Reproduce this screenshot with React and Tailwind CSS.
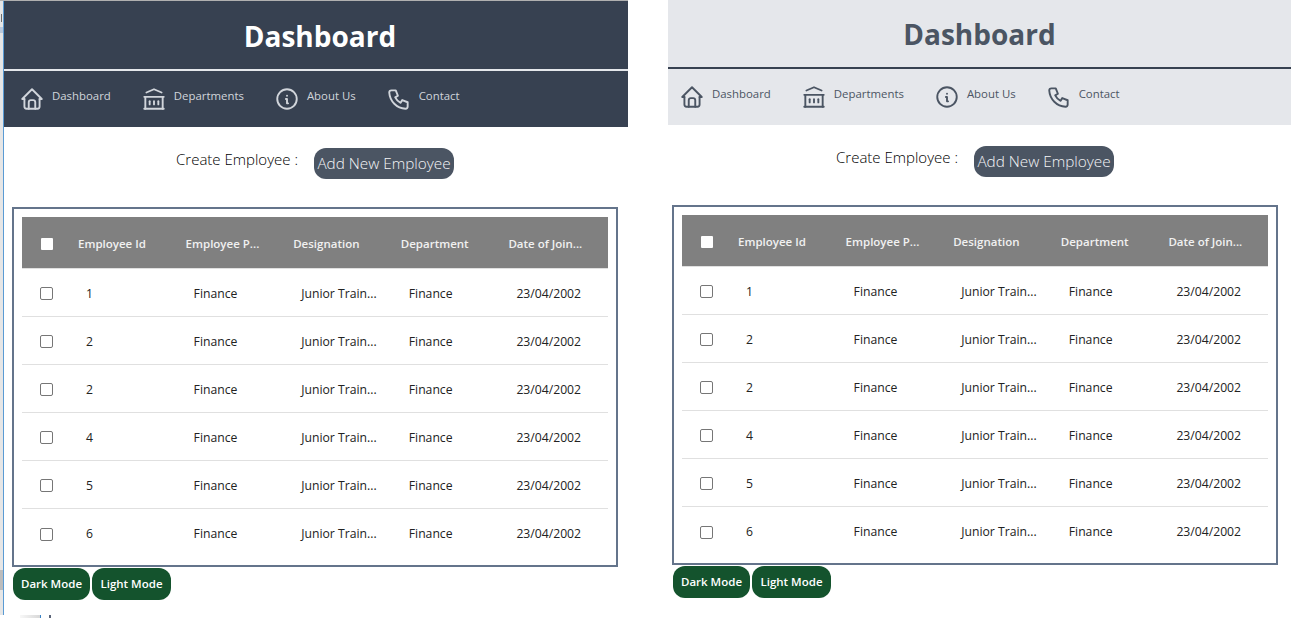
import { TbHome, TbBuildingBank, TbInfoCircle, TbPhone } from 'react-icons/tb';

const navItems = [
  { label: 'Dashboard', icon: TbHome },
  { label: 'Departments', icon: TbBuildingBank },
  { label: 'About Us', icon: TbInfoCircle },
  { label: 'Contact', icon: TbPhone },
];

const rows = ['1', '2', '2', '4', '5', '6'];

function EmployeeTable() {
  return (
    <div className="border-2 border-[#64748b] p-2 h-[360px] w-[606px]">
      <div className="grid grid-cols-[50px_repeat(5,107.6px)] h-[52px] pt-0.5 items-center bg-[#808080] border-b border-[#e0e0e0] text-[11.5px] font-semibold text-[#f1f1f1]">
        <div className="flex justify-center">
          <span className="block w-3 h-3 bg-white rounded-[1px]" />
        </div>
        <div className="pl-1.5">Employee Id</div>
        <div className="pl-1.5">Employee P...</div>
        <div className="pl-1.5">Designation</div>
        <div className="pl-1.5">Department</div>
        <div className="pl-1.5 whitespace-nowrap">Date of Join...</div>
      </div>
      {rows.map((id, index) => (
        <div
          key={index}
          className="grid grid-cols-[50px_repeat(5,107.6px)] h-[48px] items-center border-b border-[#e0e0e0] last:border-b-0 text-[12.2px] text-[#222222]"
        >
          <div className="flex justify-center pr-px pt-0.5">
            <span className="block w-[13px] h-[13px] bg-white border border-[#767676] rounded-[2px]" />
          </div>
          <div className="pl-3.5 pt-[3px]">{id}</div>
          <div className="pl-3.5 pt-[3px]">Finance</div>
          <div className="pl-3.5 pt-[3px]">Junior Train...</div>
          <div className="pl-3.5 pt-[3px]">Finance</div>
          <div className="pl-3.5 pt-[3px]">23/04/2002</div>
        </div>
      ))}
    </div>
  );
}

function Panel({ dark, className }) {
  return (
    <div className={className}>
      <div className={dark ? 'bg-[#374151]' : 'bg-[#e5e7eb]'}>
        <div className={`flex items-center justify-center border-b-2 ${dark ? 'h-[70px] border-[#e5e7eb] pl-2 pt-0.5' : 'h-[69px] border-[#374151]'}`}>
          <h1 className={`text-[28px] font-bold ${dark ? 'text-white' : 'text-[#4b5563]'}`}>Dashboard</h1>
        </div>
        <nav className={`h-[56px] flex items-center gap-[30px] ${dark ? 'pl-[15px] text-[#d1d5db]' : 'pl-[11px] text-[#4b5563]'}`}>
          {navItems.map(({ label, icon: Icon }) => (
            <a key={label} className="flex items-center gap-[7px] text-[11.4px]">
              <Icon className="w-[26px] h-[26px]" strokeWidth={1.75} />
              <span className="-mt-1.5">{label}</span>
            </a>
          ))}
        </nav>
      </div>
      <div className={`flex items-center gap-4 pt-[21px] h-[80px] pb-7 ${dark ? 'pl-[172px]' : 'pl-[168px]'}`}>
        <span className="font-light text-[15px] text-black -mt-[9px]">Create Employee :</span>
        <button className="bg-[#4b5563] text-[#f3f4f6] font-light text-[15.3px] rounded-xl h-[31px] w-[140px] pb-px">
          Add New Employee
        </button>
      </div>
      <div className={dark ? 'pl-2' : 'pl-1'}>
        <EmployeeTable />
        <div className="flex gap-0.5 mt-px ml-px">
          <button className="bg-[#14532d] text-white text-[11.5px] font-semibold rounded-xl h-8 w-[77px]">Dark Mode</button>
          <button className="bg-[#14532d] text-white text-[11.5px] font-semibold rounded-xl h-8 w-[79px]">Light Mode</button>
        </div>
      </div>
    </div>
  );
}

export default function App() {
  return (
    <div className="flex bg-white min-h-[634px] font-['Open_Sans',sans-serif]">
      <div className="w-[628px] flex flex-col">
        <div className="h-[615px] flex border-t border-[#b0b0b0]">
          {/* edge of the neighbouring window caught in the screenshot */}
          <div className="w-[3px] shrink-0 flex flex-col bg-[#e6e6e6]">
            <span className="mt-[13px] ml-px w-px h-[8px] bg-[#6b6b6b]" />
            <span className="mt-[5px] h-[6px] bg-[#b8c8dc]" />
            <span className="mt-[537px] h-[20px] bg-[#bcbcbc]" />
          </div>
          <Panel dark className="flex-1 border-l border-[#5a9bd4]" />
        </div>
        <div className="flex h-[3px] pl-5">
          <span className="w-5 bg-gradient-to-r from-[#f8f8f8] to-[#d8d8d8]" />
          <span className="w-px bg-[#3b82c4]" />
          <span className="ml-2 w-0.5 bg-[#5b6478]" />
        </div>
      </div>
      <Panel className="w-[623px] ml-10" />
    </div>
  );
}
